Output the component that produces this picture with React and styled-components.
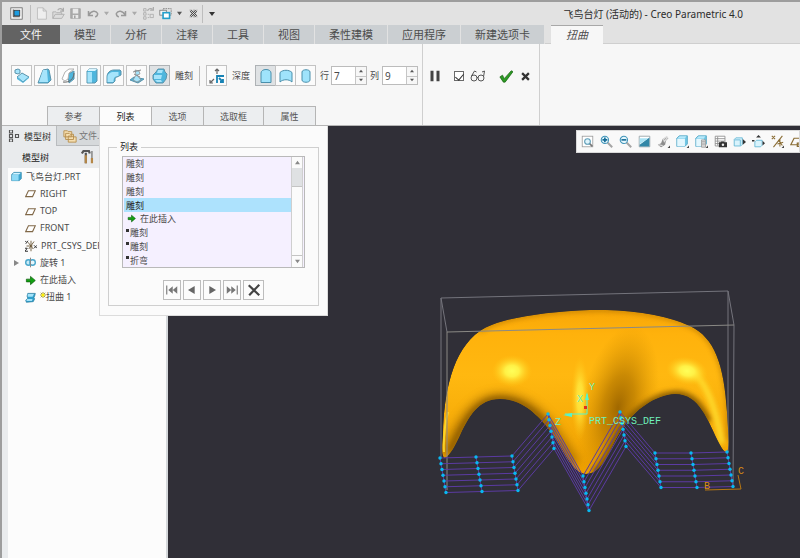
import React, { useState } from 'react'
import styled, { createGlobalStyle } from 'styled-components'

const GlobalStyle = createGlobalStyle`
  *{
    box-sizing:border-box;
  }
  body{
    margin:0;
    font-family:"Noto Sans","Noto Sans CJK SC",sans-serif;
    font-size:9px;
    color:#4a4a4a;
    background:#302f37;
  }
  button,input{
    font:inherit;
    color:inherit;
  }
  button{
    padding:0;
    border:0;
    background:none;
  }
  svg{
    display:block;
    flex:none;
  }
`

/* ---------- layout ---------- */

const Window = styled.div`
  display:flex;
  flex-direction:column;
  min-height:100vh;
  border-top:2px solid #9d9d9d;
  border-left:2px solid #9d9d9d;
  overflow:hidden;
`

const TitleBar = styled.header`
  display:flex;
  align-items:center;
  height:23px;
  padding-left:3px;
  background:#e2e2e2;
`

const QuickBar = styled.div`
  display:flex;
  align-items:center;
  width:240px;
`

const QuickButton = styled.button`
  display:flex;
  align-items:center;
  justify-content:center;
  width:${({ $w }) => $w || 17}px;
  height:16px;
`

const Divider = styled.span`
  width:1px;
  height:${({ $h }) => $h || 18}px;
  margin:0 ${({ $gap }) => $gap || 0}px;
  background:#bdbdbd;
`

const Title = styled.h1`
  flex:1;
  margin:0;
  padding-right:57px;
  font-size:10px;
  line-height:16px;
  font-weight:400;
  color:#2c2c2c;
  text-align:right;
  white-space:nowrap;
`

const RibbonTabs = styled.nav`
  display:flex;
  height:19px;
  background:#e2e2e2;
  border-bottom:1px solid #cfcfcf;
`

const RibbonTab = styled.button`
  height:19px;
  padding:0 14px;
  font-size:11px;
  line-height:18px;
  color:#4d4d4d;
  background:#cbcfd2;
  border-right:1px solid #e2e2e2;
  white-space:nowrap;
`

const FileTab = styled(RibbonTab)`
  padding:0 18px;
  color:#f4f4f4;
  background:#636363;
  border-right:0;
`

const ActiveTab = styled(RibbonTab)`
  margin-left:6px;
  padding:0 15px;
  font-style:italic;
  line-height:16px;
  background:#f7f7f7;
  border-top:1px solid #a8a8a8;
  border-right:0;
`

const Ribbon = styled.section`
  display:flex;
  height:82px;
  background:#f7f7f7;
  border-bottom:1px solid #b5b5b5;
`

const RibbonLeft = styled.div`
  display:flex;
  flex-direction:column;
  justify-content:space-between;
  width:421px;
  padding-top:21px;
  border-right:1px solid #cfcfcf;
`

const RibbonRight = styled.div`
  display:flex;
  align-items:flex-start;
  width:117px;
  padding:22px 0 0 6px;
  border-right:1px solid #cfcfcf;
`

const ToolRow = styled.div`
  display:flex;
  align-items:center;
  padding-left:9px;
`

const ToolButton = styled.button`
  display:flex;
  align-items:center;
  justify-content:center;
  flex:none;
  width:21px;
  height:21px;
  background:${({ $on }) => ($on ? '#dfe2e4' : '#fbfbfb')};
  border:1px solid ${({ $on }) => ($on ? '#aeb2b5' : '#c3c3c3')};
`

const ToolGroup = styled.div`
  display:flex;
  flex:none;
  button + button{
    margin-left:${({ $joined }) => ($joined ? -1 : 2)}px;
  }
`

const RowLabel = styled.label`
  margin:0 ${({ $r }) => $r}px 0 ${({ $l }) => $l}px;
  line-height:14px;
  white-space:nowrap;
`

const Spin = styled.span`
  display:flex;
  flex:none;
  width:36px;
  height:19px;
  background:#fff;
  border:1px solid #bcbcbc;
`

const SpinInput = styled.input`
  flex:1;
  min-width:0;
  padding:0 2px;
  font-size:10px;
  border:0;
  outline:0;
  background:none;
`

const SpinArrows = styled.span`
  display:grid;
  grid-template-rows:1fr 1fr;
  width:11px;
  border-left:1px solid #c6c6c6;
`

const SpinArrow = styled.button`
  display:flex;
  align-items:center;
  justify-content:center;
  background:#f7f7f7;
  & + &{
    border-top:1px solid #c6c6c6;
  }
`

const ActionButton = styled.button`
  display:flex;
  align-items:center;
  justify-content:center;
  width:${({ $w }) => $w}px;
  height:20px;
`

const Preview = styled.label`
  display:flex;
  align-items:center;
  gap:6px;
  height:20px;
  margin:0 13px;
`

const Check = styled.input`
  appearance:none;
  width:10px;
  height:10px;
  margin:0;
  background:#fff;
  border:1px solid #6a6a6a;
  &:checked::after{
    content:'';
    display:block;
    width:4px;
    height:7px;
    margin:0 0 0 2px;
    border:solid #333;
    border-width:0 1px 1px 0;
    transform:rotate(40deg);
  }
`

const PanelTabs = styled.div`
  display:flex;
  padding-left:45px;
`

const PanelTab = styled.button`
  min-width:${({ $wide }) => ($wide ? 61 : 53)}px;
  height:19px;
  margin-right:-1px;
  line-height:17px;
  color:${({ $on }) => ($on ? '#222' : '#555')};
  background:${({ $on }) => ($on ? '#fcfcfc' : '#eceef0')};
  border:1px solid #b5b5b5;
  border-bottom:0;
`

const Body = styled.main`
  position:relative;
  display:flex;
  flex:1;
`

const Side = styled.aside`
  display:flex;
  flex-direction:column;
  width:166px;
  background:#fcfcfc;
  border-right:2px solid #d4d7da;
`

const SideTabs = styled.div`
  display:flex;
  height:20px;
  background:#e9ebed;
`

const SideTab = styled.button`
  display:flex;
  align-items:center;
  gap:${({ $on }) => ($on ? 4 : 2)}px;
  width:${({ $on }) => ($on ? 54 : 110)}px;
  padding-left:6px;
  white-space:nowrap;
  color:${({ $on }) => ($on ? '#333' : '#777')};
  background:${({ $on }) => ($on ? '#e9ebed' : '#d6d9db')};
  border-left:${({ $on }) => ($on ? '0' : '1px solid #b9bcbf')};
  border-bottom:${({ $on }) => ($on ? '0' : '1px solid #b9bcbf')};
`

const SideHead = styled.div`
  display:flex;
  align-items:center;
  gap:32px;
  height:22px;
  padding-left:20px;
  background:#e9ebed;
`

const SideTitle = styled.h2`
  margin:0;
  font-size:9px;
  font-weight:400;
  color:#222;
`

const Tree = styled.ul`
  display:grid;
  grid-template-rows:repeat(8, 1fr);
  min-height:138px;
  margin:0;
  padding:0;
  list-style:none;
  border-left:6px solid #e9ebed;
  flex:none;
`

const TreeItem = styled.li`
  display:flex;
  align-items:center;
  gap:4px;
  padding-left:${({ $root }) => ($root ? 3 : 17)}px;
  white-space:nowrap;
  line-height:14px;
`

const Twisty = styled.button`
  width:8px;
  margin:0 0 0 -12px;
`

const SideFill = styled.div`
  flex:1;
  border-left:6px solid #e9ebed;
`

/* panel dropped under the active dashboard tab, over tree and view */
const Popup = styled.section`
  position:absolute;
  top:0;
  left:97px;
  width:229px;
  padding:15px 8px 9px 8px;
  background:#fbfbfb;
  border:solid #dcdcdc;
  border-width:0 1px 1px 1px;
`

const Group = styled.fieldset`
  margin:0;
  padding:3px 13px 5px 13px;
  border:1px solid #cfcfcf;
`

const Legend = styled.legend`
  margin-left:-5px;
  padding:0 3px;
  line-height:12px;
  color:#222;
`

const ListFrame = styled.div`
  display:flex;
  width:183px;
  height:112px;
  background:#f5f0ff;
  border:1px solid #b9b9b9;
`

const List = styled.ul`
  display:grid;
  grid-template-rows:repeat(8, 1fr);
  flex:1;
  margin:0;
  padding:0 0 0 1px;
  list-style:none;
`

const ListItem = styled.li`
  display:flex;
  align-items:center;
  gap:${({ $arrow }) => ($arrow ? 4 : 1)}px;
  padding-left:${({ $arrow }) => ($arrow ? 3 : 2)}px;
  line-height:13px;
  color:${({ $on }) => ($on ? '#222' : '#4a4a4a')};
  background:${({ $on }) => ($on ? '#ade2fd' : 'none')};
`

const Pending = styled.i`
  width:3px;
  height:3px;
  margin-bottom:5px;
  background:#333;
`

const Scroll = styled.div`
  display:flex;
  flex-direction:column;
  width:12px;
  margin-right:1px;
  background:#fbfbfb;
  border:solid #cfcfcf;
  border-width:0 1px;
`

const ScrollButton = styled.button`
  display:flex;
  align-items:center;
  justify-content:center;
  height:11px;
`

const Thumb = styled.div`
  height:19px;
  background:#dfe1e3;
  border-bottom:1px solid #c4c4c4;
`

const Track = styled.div`
  flex:1;
  border-bottom:1px solid #c4c4c4;
`

const Steps = styled.div`
  display:flex;
  justify-content:center;
  gap:2px;
  margin-top:12px;
`

const Step = styled.button`
  display:flex;
  align-items:center;
  justify-content:center;
  width:${({ $wide }) => ($wide ? 21 : 18)}px;
  height:20px;
  background:#fcfcfc;
  border:1px solid #bdbdbd;
`

const View = styled.section`
  position:relative;
  flex:1;
  min-width:0;
  background:#302f37;
  overflow:hidden;
`

const ViewBar = styled.div`
  position:absolute;
  top:4px;
  left:408px;
  right:0;
  display:flex;
  align-items:center;
  gap:3px;
  height:23px;
  padding-left:4px;
  background:#f9f9f9;
  border:1px solid #d9d9d9;
  overflow:hidden;
`

const ViewButton = styled.button`
  flex:none;
  width:16px;
  height:14px;
`

/* ---------- icons ---------- */

const BLUE = '#a6e4fb'
const MID = '#4fb6dd'
const EDGE = '#5a93ab'

const Svg = ({ size = 16, children }) => (
  <svg width={size} height={size} viewBox='0 0 16 16' fill='none' aria-hidden='true'>{children}</svg>
)

const Tri = ({ dir = 'down', color = '#555', size = 5 }) => {
  const d = { down: 'M0 1h6l-3 4z', up: 'M0 5h6l-3-4z', right: 'M1 0v6l5-3z', left: 'M5 0v6l-5-3z' }[dir]
  return <svg width={size} height={size} viewBox='0 0 6 6' aria-hidden='true'><path d={d} fill={color} /></svg>
}

const GreenArrow = ({ size = 12 }) => (
  <Svg size={size}><path d='M2 6h6V2l7 6-7 6v-4H2z' fill='#12a012' stroke='#0a5a0a' /></Svg>
)

const quick = {
  app: <><rect x='1' y='1' width='14' height='14' stroke='#666' fill='#fafafa' /><rect x='5' y='4' width='7' height='7' fill='#1b9be0' stroke='#333' /><path d='M4 3v9h8' stroke='#333' /></>,
  fresh: <path d='M3 1h7l4 4v10H3zM10 1v4h4' stroke='#b8b8b8' fill='#eee' />,
  open: <><path d='M1 14V6h4l1 1h6v2M1 14l3-5h11l-3 5z' stroke='#aaa' fill='#ddd' /><path d='M7 4c2-3 5-2 6 0M14 1v4h-4' stroke='#aaa' strokeWidth='1.500' /></>,
  save: <><path d='M1 1h14v14H1z' fill='#aaa' stroke='#999' /><path d='M4 1h8v7H4zM4 10h8v5H4z' fill='#e8e8e8' /><path d='M6 11h2v4H6z' fill='#999' /></>,
  undo: <path d='M2 4v6h6M2.500 9C6 3 12 3 14 7c1 3-1 4-3 5' stroke='#999' strokeWidth='2' />,
  redo: <path d='M14 4v6H8M13.500 9C10 3 4 3 2 7c-1 3 1 4 3 5' stroke='#999' strokeWidth='2' />,
  regen: <><path d='M2 2h3v3H2zM2 7h3v3H2zM2 12h3v3H2zM7 9h2M7 13h2M10 9h4v4h-4z' stroke='#aaa' /><path d='M7 5c0-3 4-4 6-2M14 0v4h-4' stroke='#aaa' strokeWidth='1.500' /></>,
  windows: <><rect x='5' y='2' width='10' height='8' stroke='#777' strokeDasharray='2 1' /><rect x='1' y='4' width='8' height='6' fill='#f7f7f7' stroke='#777' /><rect x='5' y='7' width='8' height='7' fill='#fff' stroke='#259fcb' strokeWidth='2' /></>,
  close: <><path d='M1 2h14M1 14h14' stroke='#777' strokeDasharray='4 2' /><path d='M3 3l10 10M13 3L3 13' stroke='#444' strokeWidth='4' /><path d='M3 3l10 10M13 3L3 13' stroke='#eee' strokeWidth='1.500' /></>,
}

const warps = [
  ['变换', <><path d='M1 2l3-1 2 1v3L4 6 1 5z' fill={BLUE} stroke={EDGE} /><path d='M3 9l5-4 7 4-6 5z' fill={BLUE} stroke={EDGE} /><path d='M3 9v2l6 4 6-5V9l-6 5z' fill={MID} /></>],
  ['扭曲', <><path d='M6 2l5-1 1 1 2 10-3 3H1z' fill={MID} stroke={EDGE} /><path d='M6 2h4l1 12H2z' fill={BLUE} /></>],
  ['骨架', <><path d='M8 6l6-3v8l-5 4z' fill={MID} stroke={EDGE} /><path d='M2 11l3-7 4-3h5L9 5l-1 6-3 2z' fill='#fff' stroke='#b2b2b2' /><path d='M3 14c6 1 11-3 11-9' stroke='#666' /></>],
  ['拉伸', <><path d='M4 3l2-2h8v12l-2 2H4z' fill={MID} stroke={EDGE} /><path d='M4.500 4H9v10.500H4.500z' fill={BLUE} /><path d='M4 3l2-2h8l-2 2z' fill='#d8f5ff' /></>],
  ['折弯', <><path d='M1 9c0-4 3-7 7-7h6l1 1v4l-4 2c-2 0-2 1-2 4l-2 2H1z' fill={MID} stroke={EDGE} /><path d='M1.500 9c0-3 3-5 6-5h5v4c-4 0-5 2-5 6h-6z' fill={BLUE} /></>],
  ['扭转', <><path d='M1 12l4-3 10 2-6 4z' fill={MID} stroke={EDGE} /><path d='M6 2l4 1 1 3-3 1 4 5-4 2-4-2 3-5z' fill={BLUE} stroke='#888' strokeWidth='.7' /><path d='M4 4l8-2M5 6l6 3' stroke='#888' /></>],
  ['雕刻', <><path d='M6 1h6l1 3 2 2-1 5-3 4H4L1 11V7l3-3z' fill={MID} stroke={EDGE} /><path d='M6 2h5l-1 3H5zM2 7h8l-1 4H2zM3 12h6l1 2H5z' fill={BLUE} /></>],
]

const depths = [
  ['单侧', 'M3 14.500V5c0-2 2-3.500 5-3.500S13 3 13 5v9.500z'],
  ['双侧', 'M2 14V4.500C5 1.500 11 1.500 14 4.500V14C11 11 5 11 2 14z'],
  ['对称', 'M4 4c0-3 8-3 8 0v8c0 3-8 3-8 0z'],
]

const lens = <><rect x='1.500' y='1.500' width='13' height='13' fill='#fff' stroke='#9a9a9a' /><path d='M10 10l4 4' stroke='#777' strokeWidth='2' /><circle cx='8' cy='8' r='3.500' fill='#dff4fc' stroke='#5a9ab5' strokeWidth='1.300' /></>
const glass = sign => <><path d='M9 9l6 6' stroke='#a5a5a5' strokeWidth='2.500' /><circle cx='6' cy='6' r='4.500' fill='#e4f6fc' stroke='#3f93b8' strokeWidth='1.300' /><path d={sign} stroke='#146b96' strokeWidth='2' /></>
const corner = <path d='M16 13v3h-3z' fill='#444' />
const cube = <><path d='M1 4l3-3h10v10l-3 3H1z' fill='#71c7e5' stroke='#51a5c4' /><path d='M1.500 4.500H11V14H1.500z' fill='#e4f7fe' /><path d='M2 4l2.500-2.500H13L11 4z' fill='#b9e9fa' /></>

const viewIcons = [
  ['重新调整', lens],
  ['放大', glass('M3 6h6M6 3v6')],
  ['缩小', glass('M3 6h6')],
  ['重画', <><path d='M1.500 1.500h13v13h-13z' fill='#fff' stroke='#8f9ba0' /><path d='M2 14v-2L14 3v11z' fill='#3187a8' /><path d='M2 11V4h11z' fill='#a7e2f4' /></>],
  ['渲染', <><path d='M1 12l4-2 2-5 5-3 2 2-3 3-1 5-5 3z' fill='#8d8d8d' /><path d='M8 5l4-3 1 1-4 5zM2 12l5 1' stroke='#ddd' strokeWidth='1.500' />{corner}</>],
  ['显示样式', <>{cube}{corner}</>],
  ['已保存方向', <>{cube}<path d='M8 6h5v9H8z' fill='#ddd' stroke='#999' /><path d='M8 8h5M8 10h5M8 12h5' stroke='#aaa' />{corner}</>],
  ['视图管理器', <><path d='M1.500 1.500h12v12h-12zM1.500 4.500h12M1.500 7.500h12M1.500 10.500h12M4.500 2v11' fill='#fff' stroke='#888' /><path d='M6 9h2l1-1h3l1 1h3v6H6z' fill='#333' /><circle cx='11' cy='12' r='1.500' fill='#eee' /></>],
  ['透视图', <><path d='M1.500 5.500l2-2h8v8l-2 2h-8z' fill='#d9f3fc' stroke='#5bb3d2' /><path d='M2 6h7v7' stroke='#5bb3d2' /><path d='M12 5l4 3.500-4 3.500z' fill='#333' /></>],
  ['外观', <><path d='M3.500 8.500l2-2h7v6l-2 2h-7z' fill='#d9f3fc' stroke='#5bb3d2' /><path d='M8 0l3 3H5zM0 6h3v2H0zM13 7l3 3-3 3z' fill='#333' /></>],
  ['基准显示', <><path d='M1 1l4 4M5 1L1 5M14 1L3 15M9 6l5 7M15 9l-7 2M11 5v9' stroke='#8a6d35' strokeWidth='1.300' />{corner}</>],
  ['注释显示', <path d='M5 4h11l-4 8H1zM9 10h6v4H9z' stroke='#8a6d35' strokeWidth='1.500' />],
]

const treeIcons = {
  part: <><path d='M1 5l3-3h11v9l-3 3H1z' fill='#3ea5cf' stroke='#2e86ab' /><path d='M1.500 5.500H11V14H1.500z' fill='#8edaf6' /><path d='M2 5l2-2h10l-2.500 2z' fill='#d5f4ff' /></>,
  plane: <path d='M5 4h10l-4 8.500H1z' stroke='#806848' strokeWidth='1.600' fill='#fff' />,
  csys: <><path d='M8 1v14M2 8h8M4 3l7 9M12 2L5 12' stroke='#6d5a3a' strokeWidth='1.200' /><path d='M0 1l2 2M4 1L1 5M12 7l4 4M16 7l-4 4M0 11h3l-3 4h4' stroke='#333' strokeWidth='1.300' /></>,
  revolve: <><ellipse cx='5' cy='8' rx='4' ry='4' stroke='#49a6cb' strokeWidth='2' fill='#c7ebf8' /><ellipse cx='11' cy='8' rx='4' ry='4' stroke='#49a6cb' strokeWidth='2' fill='#e7f7fc' /><path d='M8 1v14' stroke='#888' strokeWidth='1.500' /></>,
  warp: <><path d='M4 2h11l-1 4-1 2 1 2-2 4-10 1-1-3 3-3-1-3z' fill='#2f9fcb' stroke='#2a7b9e' /><path d='M4 3h9l-2 4H4zM3 10h8l-1 3H2z' fill='#a3e3fa' /></>,
}

/* ---------- 3D view ---------- */

const columns = [
  [440, 458], [476, 457], [512, 456], [548, 414], [583, 476],
  [620, 412], [655, 453], [691, 453], [727, 452],
]
const levels = [0, 1, 2, 3, 4, 5, 6]
const node = ([x, y], i) => [x + i, y + i * 5.75]

const shape = 'M445 458C441 457 442 446 443 433C444 394 452 350 480 331C499 318 543 312 590 310C625 309 665 314 690 326C715 338 724 365 727 412C728 430 730 448 727 452Q724 453 720 445C707 420 700 394 675 394C655 395 635 410 624 426C610 444 606 473 586 474C572 474 563 448 552 433C539 416 523 399 500 399C478 399 469 417 461 433C456 444 450 456 445 458Z'

const Model = () => (
  <svg width='100%' height='432' viewBox='168 126 632 432' preserveAspectRatio='xMinYMin meet' role='img' aria-label='飞鸟台灯'>
    <defs>
      <clipPath id='body'><path d={shape} /></clipPath>
      <linearGradient id='skin' x1='0' y1='310' x2='0' y2='474' gradientUnits='userSpaceOnUse'>
        <stop offset='0' stopColor='#f8a607' />
        <stop offset='.15' stopColor='#ffb20c' />
        <stop offset='.4' stopColor='#ffb810' />
        <stop offset='1' stopColor='#efa000' />
      </linearGradient>
      <radialGradient id='shine'>
        <stop offset='0' stopColor='#ffff59' />
        <stop offset='.35' stopColor='#fff146' />
        <stop offset='1' stopColor='#ffc818' stopOpacity='0' />
      </radialGradient>
      <radialGradient id='shade'>
        <stop offset='0' stopColor='#a06800' />
        <stop offset='.4' stopColor='#b87a00' stopOpacity='.75' />
        <stop offset='1' stopColor='#d99200' stopOpacity='0' />
      </radialGradient>
      <filter id='soft' x='-50%' y='-50%' width='200%' height='200%'><feGaussianBlur stdDeviation='5' /></filter>
      <filter id='fine' x='-50%' y='-50%' width='200%' height='200%'><feGaussianBlur stdDeviation='2.500' /></filter>
    </defs>

    <g stroke='#74747c' fill='none'>
      <path d='M441 458V298L728 291V452M441 298L447 332M728 291L734 325L733 487' />
    </g>

    <g clipPath='url(#body)'>
      <path d={shape} fill='url(#skin)' />
      <ellipse cx='618' cy='408' rx='38' ry='84' fill='url(#shade)' transform='rotate(12 618 408)' />
      <path d='M446 456C463 423 476 400 500 400C523 400 541 416 553 433L574 465' fill='none' stroke='#9a6500' strokeWidth='14' filter='url(#soft)' opacity='.7' />
      <path d='M450 452C463 423 476 399 500 399C523 399 541 416 553 433' fill='none' stroke='#7a4f00' strokeWidth='5' filter='url(#fine)' opacity='.7' />
      <path d='M594 474C610 460 613 444 624 428C637 410 657 395 677 395C694 396 700 408 708 422' fill='none' stroke='#6f4800' strokeWidth='9' filter='url(#fine)' opacity='.75' />
      <path d='M480 331C499 318 543 311 590 310C625 309 665 314 690 326C715 338 725 365 728 412V440' fill='none' stroke='#a86c00' strokeWidth='3' filter='url(#fine)' opacity='.8' />
      <ellipse cx='512' cy='371' rx='20' ry='16' fill='url(#shine)' />
      <ellipse cx='580' cy='398' rx='9' ry='42' fill='url(#shine)' opacity='.7' />
      <path d='M690 370Q712 384 722 444' fill='none' stroke='#ffe131' strokeWidth='5' filter='url(#fine)' />
      <ellipse cx='687' cy='371' rx='21' ry='14' fill='url(#shine)' transform='rotate(12 687 371)' />
      <path d='M444 452Q443 431 448 412' fill='none' stroke='#ffe131' strokeWidth='2' opacity='.8' />
    </g>

    <path d='M447 490V332L734 325' fill='none' stroke='#8a8985' />

    <g stroke='#5b3ba2' fill='none'>
      {levels.map(i => (
        <polyline key={i} points={columns.map(c => node(c, i).join(',')).join(' ')} />
      ))}
      {columns.map((c, k) => (
        <polyline key={k} points={`${node(c, 0)} ${node(c, 6)}`} />
      ))}
    </g>
    <g fill='#08b9f2'>
      {columns.map((c, k) => levels.map(i => {
        const [x, y] = node(c, i)
        return <circle key={`${k}-${i}`} cx={x} cy={y} r='1.700' />
      }))}
    </g>

    <g stroke='#54f5cc' fill='none'>
      <path d='M587 414V394M587 414H565' />
      <path d='M587 392l-2 8h4zM563 415l9-2v4z' fill='#54f5cc' stroke='none' />
      <rect x='584' y='406' width='3' height='3' fill='#e0301e' stroke='none' />
    </g>
    <g fontFamily='"Liberation Mono", monospace' fontSize='10' fill='#6ff0bb'>
      <text x='589' y='424'>PRT_CSYS_DEF</text>
      <text x='589' y='390'>Y</text>
      <text x='577' y='402'>X</text>
      <text x='555' y='425'>Z</text>
      <text x='704' y='489' fill='#d98c13'>B</text>
      <text x='738' y='474' fill='#d98c13'>C</text>
    </g>
    <path d='M705 490L741 489L738 475' fill='none' stroke='#b87812' />
  </svg>
)

/* ---------- parts ---------- */

const Spinner = ({ id, start }) => {
  const [value, setValue] = useState(start)
  return (
    <Spin>
      <SpinInput id={id} value={value} onChange={e => setValue(Number(e.target.value) || 0)} />
      <SpinArrows>
        <SpinArrow aria-label='增加' onClick={() => setValue(value + 1)}><Tri dir='up' size={4} /></SpinArrow>
        <SpinArrow aria-label='减少' onClick={() => setValue(value - 1)}><Tri size={4} /></SpinArrow>
      </SpinArrows>
    </Spin>
  )
}

const tabs = ['模型', '分析', '注释', '工具', '视图', '柔性建模', '应用程序', '新建选项卡']

const operations = [
  { text: '雕刻' },
  { text: '雕刻' },
  { text: '雕刻' },
  { text: '雕刻' },
  { text: '在此插入', arrow: true },
  { text: '雕刻', pending: true },
  { text: '雕刻', pending: true },
  { text: '折弯', pending: true },
]

const ListPanel = () => {
  const [selected, setSelected] = useState(3)
  return (
    <Popup>
      <Group>
        <Legend>列表</Legend>
        <ListFrame>
          <List role='listbox' aria-label='列表'>
            {operations.map((op, i) => (
              <ListItem key={i} role='option' aria-selected={i === selected} $on={i === selected} $arrow={op.arrow} onClick={() => setSelected(i)}>
                {op.arrow && <GreenArrow size={9} />}
                {op.pending && <Pending />}
                {op.text}
              </ListItem>
            ))}
          </List>
          <Scroll>
            <ScrollButton aria-label='向上'><Tri dir='up' color='#888' /></ScrollButton>
            <Thumb />
            <Track />
            <ScrollButton aria-label='向下'><Tri color='#888' /></ScrollButton>
          </Scroll>
        </ListFrame>
        <Steps>
          <Step aria-label='第一个'><Svg size={12}><path d='M1 2v12' stroke='#777' strokeWidth='1.500' /><path d='M9 3v10L3 8zM15 3v10L9 8z' fill='#777' /></Svg></Step>
          <Step aria-label='上一个'><Tri dir='left' color='#666' size={8} /></Step>
          <Step aria-label='下一个'><Tri dir='right' color='#666' size={8} /></Step>
          <Step aria-label='最后一个'><Svg size={12}><path d='M15 2v12' stroke='#777' strokeWidth='1.500' /><path d='M7 3v10l6-5zM1 3v10l6-5z' fill='#777' /></Svg></Step>
          <Step $wide aria-label='移除'><Svg size={14}><path d='M2 2.500l12 11.500M14 2L2.500 14' stroke='#444' strokeWidth='2.500' /></Svg></Step>
        </Steps>
      </Group>
    </Popup>
  )
}

const StarMark = styled.svg`
  display:inline-block;
  vertical-align:2px;
`

const Star = () => (
  <StarMark width='6' height='6' viewBox='0 0 8 8' aria-hidden='true'>
    <path d='M4 0v8M0 4h8M1 1l6 6M7 1L1 7' stroke='#8a8000' />
    <circle cx='4' cy='4' r='2' fill='#fff200' />
  </StarMark>
)

const ModelTree = () => (
  <Side>
    <SideTabs>
      <SideTab $on>
        <Svg size={12}><path d='M2 0h4v4H2zM2 6h4v4H2zM2 12h4v4H2zM10 6h4v4h-4z' stroke='#555' strokeWidth='1.500' /></Svg>
        模型树
      </SideTab>
      <SideTab>
        <Svg size={14}><path d='M1 2h4l1 1h4v6H1zM3 5h4l1 1h4v6H3zM6 8h4l1 1h4v6H6z' fill='#f5deb0' stroke='#b58d4c' /></Svg>
        文件...
      </SideTab>
    </SideTabs>
    <SideHead>
      <SideTitle>模型树</SideTitle>
      <button aria-label='设置'>
        <Svg size={14}><path d='M1 4l2-3h6l1 3M5.500 3v12' stroke='#555' strokeWidth='2.500' /><path d='M5.500 6v9M12.500 9v6' stroke='#b58747' strokeWidth='2.500' /><path d='M12.500 1v8' stroke='#777' strokeWidth='1.500' /></Svg>
      </button>
    </SideHead>
    <Tree>
      <TreeItem $root><Svg size={11}>{treeIcons.part}</Svg>飞鸟台灯.PRT</TreeItem>
      <TreeItem><Svg size={11}>{treeIcons.plane}</Svg>RIGHT</TreeItem>
      <TreeItem><Svg size={11}>{treeIcons.plane}</Svg>TOP</TreeItem>
      <TreeItem><Svg size={11}>{treeIcons.plane}</Svg>FRONT</TreeItem>
      <TreeItem><Svg size={12}>{treeIcons.csys}</Svg>PRT_CSYS_DEF</TreeItem>
      <TreeItem>
        <Twisty aria-label='展开'><Tri dir='right' color='#888' size={6} /></Twisty>
        <Svg size={11}>{treeIcons.revolve}</Svg>旋转 1
      </TreeItem>
      <TreeItem><GreenArrow size={11} />在此插入</TreeItem>
      <TreeItem>
        <Svg size={11}>{treeIcons.warp}</Svg>
        <span><Star />扭曲 1</span>
      </TreeItem>
    </Tree>
    <SideFill />
  </Side>
)

const App = () => (
  <Window>
    <GlobalStyle />
    <TitleBar>
      <QuickBar>
        <QuickButton $w={23} aria-label='窗口'><Svg size={13}>{quick.app}</Svg></QuickButton>
        <Divider $gap={2} />
        <QuickButton aria-label='新建'><Svg size={13}>{quick.fresh}</Svg></QuickButton>
        <QuickButton aria-label='打开'><Svg size={13}>{quick.open}</Svg></QuickButton>
        <QuickButton aria-label='保存'><Svg size={11}>{quick.save}</Svg></QuickButton>
        <QuickButton aria-label='撤销'><Svg size={12}>{quick.undo}</Svg></QuickButton>
        <QuickButton $w={11} aria-label='撤销列表'><Tri color='#aaa' /></QuickButton>
        <QuickButton aria-label='重做'><Svg size={12}>{quick.redo}</Svg></QuickButton>
        <QuickButton $w={11} aria-label='重做列表'><Tri color='#aaa' /></QuickButton>
        <QuickButton aria-label='重新生成'><Svg size={13}>{quick.regen}</Svg></QuickButton>
        <QuickButton aria-label='切换窗口'><Svg size={13}>{quick.windows}</Svg></QuickButton>
        <QuickButton $w={11} aria-label='窗口列表'><Tri /></QuickButton>
        <QuickButton aria-label='关闭'><Svg size={9}>{quick.close}</Svg></QuickButton>
        <Divider />
        <QuickButton aria-label='自定义'><Tri color='#333' size={6} /></QuickButton>
      </QuickBar>
      <Title>飞鸟台灯 (活动的) - Creo Parametric 4.0</Title>
    </TitleBar>

    <RibbonTabs>
      <FileTab>文件</FileTab>
      {tabs.map(tab => <RibbonTab key={tab}>{tab}</RibbonTab>)}
      <ActiveTab>扭曲</ActiveTab>
    </RibbonTabs>

    <Ribbon>
      <RibbonLeft>
        <ToolRow>
          <ToolGroup>
            {warps.map(([name, icon]) => (
              <ToolButton key={name} aria-label={name} $on={name === '雕刻'}><Svg>{icon}</Svg></ToolButton>
            ))}
          </ToolGroup>
          <RowLabel as='span' $l={5} $r={6}>雕刻</RowLabel>
          <Divider $h={20} $gap={0} />
          <RowLabel as='span' $l={3} $r={3} />
          <ToolButton aria-label='方向'>
            <Svg><path d='M8 1v5M6 3l2-2 2 2M1 15l4-4M1 12v3h3' stroke='#666' strokeWidth='1.200' /><path d='M8 15V8h7M10 10l4 4M14 11v3h-3' stroke='#1783b5' strokeWidth='1.800' /></Svg>
          </ToolButton>
          <RowLabel as='span' $l={5} $r={5}>深度</RowLabel>
          <ToolGroup $joined>
            {depths.map(([name, d], i) => (
              <ToolButton key={name} aria-label={name} $on={i === 0}>
                <Svg><path d={d} fill='#9fe3fb' stroke='#4a8fab' /></Svg>
              </ToolButton>
            ))}
          </ToolGroup>
          <RowLabel htmlFor='rows' $l={4} $r={2}>行</RowLabel>
          <Spinner id='rows' start={7} />
          <RowLabel htmlFor='cols' $l={3} $r={3}>列</RowLabel>
          <Spinner id='cols' start={9} />
        </ToolRow>
        <PanelTabs>
          <PanelTab>参考</PanelTab>
          <PanelTab $on>列表</PanelTab>
          <PanelTab>选项</PanelTab>
          <PanelTab $wide>选取框</PanelTab>
          <PanelTab>属性</PanelTab>
        </PanelTabs>
      </RibbonLeft>
      <RibbonRight>
        <ActionButton $w={12} aria-label='暂停'>
          <Svg size={12}><path d='M2 1h4v14H2zM10 1h4v14h-4z' fill='#444' /></Svg>
        </ActionButton>
        <Preview>
          <Check type='checkbox' defaultChecked aria-label='预览' />
          <Svg><circle cx='4' cy='10' r='3' stroke='#555' /><circle cx='11' cy='10' r='3' stroke='#555' /><path d='M7 9.500h1M1.500 8l3-5 2 1M13.500 9l1-6-2.500 1' stroke='#555' /></Svg>
        </Preview>
        <ActionButton $w={14} aria-label='确定'>
          <Svg size={14}><path d='M1 9l3-2 2 4 8-9 2 1-9 12H5z' fill='#2d9b25' stroke='#15600f' strokeWidth='.8' /></Svg>
        </ActionButton>
        <ActionButton $w={25} aria-label='取消'>
          <Svg size={9}><path d='M2 2l12 12M14 2L2 14' stroke='#333' strokeWidth='4' /></Svg>
        </ActionButton>
      </RibbonRight>
    </Ribbon>

    <Body>
      <ModelTree />
      <View>
        <Model />
        <ViewBar>
          {viewIcons.map(([name, icon]) => (
            <ViewButton key={name} aria-label={name}><Svg size={13}>{icon}</Svg></ViewButton>
          ))}
        </ViewBar>
      </View>
      <ListPanel />
    </Body>
  </Window>
)

export default App
